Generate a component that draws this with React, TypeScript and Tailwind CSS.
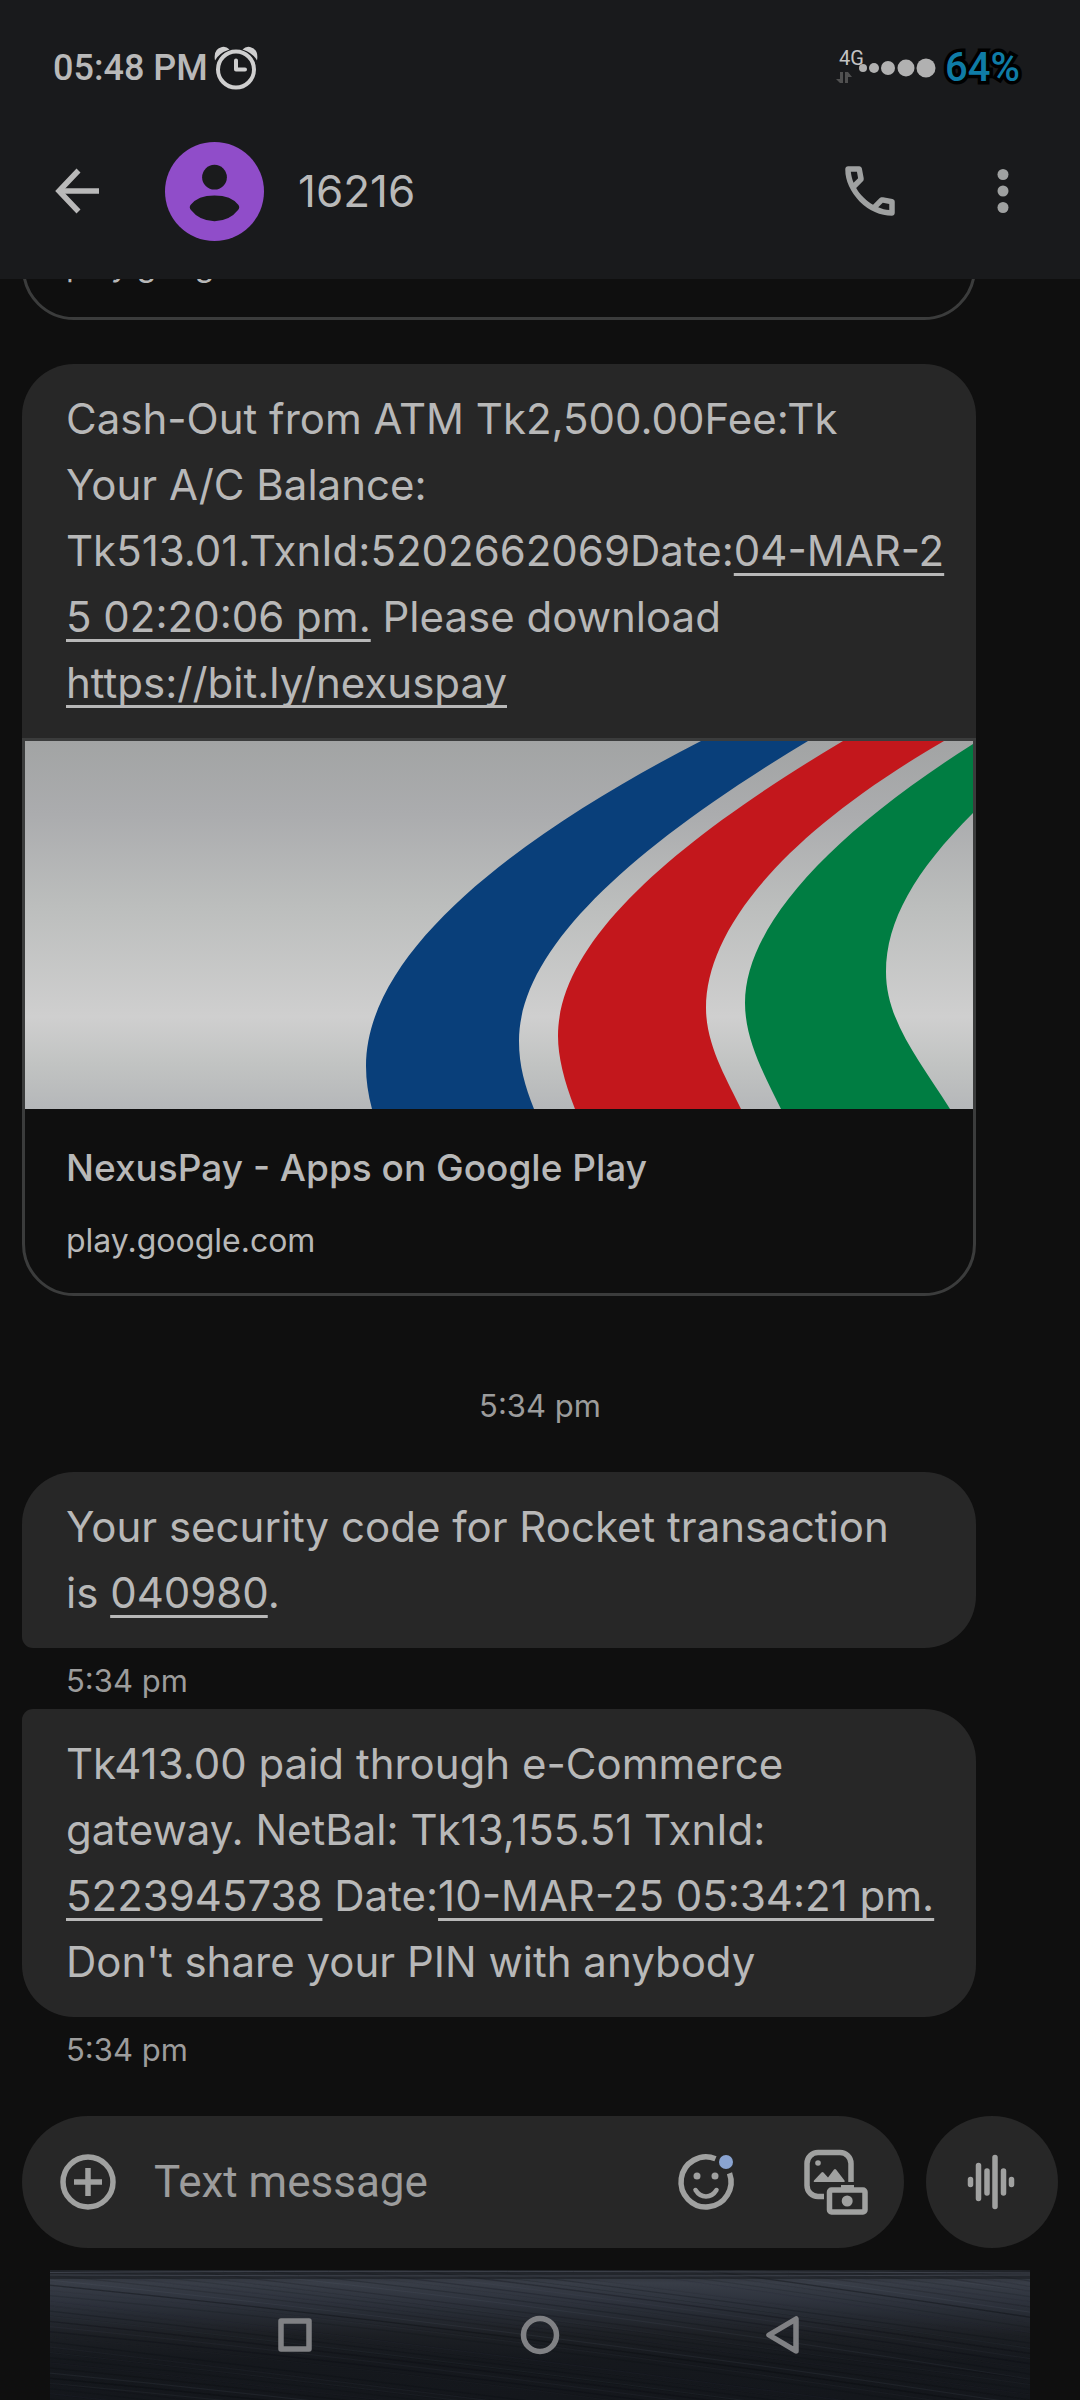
import type { ReactNode } from 'react';

function Banner() {
  return (
    <svg viewBox="0 0 948 368" className="block w-full" role="img" aria-label="NexusPay banner">
      <defs>
        <linearGradient id="metal" x1="0" y1="0" x2="0" y2="1">
          <stop offset="0" stopColor="#a2a4a4" />
          <stop offset="0.2" stopColor="#abacae" />
          <stop offset="0.45" stopColor="#bcbebd" />
          <stop offset="0.75" stopColor="#cfcfcf" />
          <stop offset="0.88" stopColor="#c1c3c2" />
          <stop offset="1" stopColor="#b5b7b9" />
        </linearGradient>
      </defs>
      <rect width="948" height="368" fill="url(#metal)" />
      <path
        d="M676 0C520 80 341 200 341 325Q341 346 347 368H509C500 345 494 325 494 300C494 210 600 110 783 0Z"
        fill="#093f7a"
      />
      <path
        d="M818 0C650 100 533 200 533 295Q533 325 550 368H716C703 340 681 305 681 267C681 190 755 95 919 0Z"
        fill="#c3171c"
      />
      <path
        d="M948 3C795 100 720 190 720 262C720 300 740 335 756 368H925C895 320 861 280 861 231C861 180 890 130 948 72Z"
        fill="#007d42"
      />
    </svg>
  );
}

function StatusBar() {
  return (
    <div className="flex h-[103px] items-end justify-between pr-[60px] pl-[53px] font-[Roboto,sans-serif]">
      <div className="flex h-[70px] items-center gap-[6px] text-[#b9b9b9]">
        <span className="text-[36px] font-medium">05:48 PM</span>
        <svg viewBox="0 0 44 44" className="size-11" role="img" aria-label="Alarm set">
          <path d="M1 14.500Q-1 3 8 1 12 0 15.500 3.500 5 7 1 14.500Z" fill="#cfcfcf" />
          <path d="M43 14.500Q45 3 36 1 32 0 28.500 3.500 39 7 43 14.500Z" fill="#cfcfcf" />
          <circle cx="22" cy="23.500" r="18" fill="none" stroke="#cfcfcf" strokeWidth="4" />
          <path d="M22 14.500v9h9" fill="none" stroke="#cfcfcf" strokeWidth="4" strokeLinecap="round" strokeLinejoin="round" />
        </svg>
      </div>
      <div className="flex h-[70px] items-center gap-2">
        <div className="relative">
          <svg viewBox="0 0 102 44" className="h-11 w-[102px]" role="img" aria-label="Signal strength">
            <g fill="#b1b1b1">
              <circle cx="28" cy="22" r="4" />
              <circle cx="39" cy="22" r="5" />
              <circle cx="53" cy="22" r="7" />
              <circle cx="71" cy="22" r="8.500" />
              <circle cx="91" cy="22" r="9.500" />
            </g>
            <path d="M5 26h3v11H5l-4-4h4zM10 26h3l4 5h-4v6h-3z" fill="#505050" />
          </svg>
          <span className="absolute top-0 left-1 text-[20px] leading-6 text-[#c4c4c4]">4G</span>
        </div>
        <span className="text-[40px] font-medium text-[#0f7ca6] [-webkit-text-stroke:7px_#000] [paint-order:stroke_fill]">
          64%
        </span>
      </div>
    </div>
  );
}

function ConversationHeader() {
  return (
    <header className="flex h-44 items-center pr-[61px] pl-[45px]">
      <button type="button" aria-label="Back" className="size-[66px]">
        <svg viewBox="0 0 66 66" className="size-[66px]" fill="none" stroke="#b9b9b9" strokeWidth="5.500">
          <path d="M33.500 12.500 14 33l19.500 20.500" />
          <path d="M13 33h41" />
        </svg>
      </button>
      <svg viewBox="0 0 100 100" className="ml-[54px] size-[99px]" role="img" aria-label="Contact photo">
        <circle cx="50" cy="50" r="50" fill="#904dc9" />
        <circle cx="50" cy="35.500" r="12.500" fill="#1a1b1c" />
        <path d="M26 63.500Q33 54 50 54t24 9.500q2 2.500 0 5Q65 80 50 80T26 68.500q-2-2.500 0-5Z" fill="#1a1b1c" />
      </svg>
      <h1 className="ml-[34px] flex-1 text-[44px] text-[#b9b9b9]">16216</h1>
      <button type="button" aria-label="Call" className="size-[66px]">
        <svg viewBox="0 -960 960 960" className="size-[66px]" fill="#9fa1a1">
          <path d="M798-120q-125 0-247-54.500T329-329Q229-429 174.500-551T120-798q0-18 12-30t30-12h162q14 0 25 9.500t13 22.500l26 140q2 16-1 27t-11 19l-97 98q20 37 47.500 71.500T387-386q31 31 65 57.500t72 48.500l94-94q9-9 23.500-13.500T670-390l138 28q14 4 23 14.500t9 23.500v162q0 18-12 30t-30 12ZM241-600l66-66-17-94h-89q5 41 14 81t26 79Zm358 358q39 17 79.500 27t81.500 13v-88l-94-19-67 67Z" />
        </svg>
      </button>
      <button type="button" aria-label="More options" className="ml-[84px] h-[66px] w-8">
        <svg viewBox="0 0 32 66" className="h-[66px] w-8" fill="#9fa1a1">
          <circle cx="16" cy="16.500" r="5.500" />
          <circle cx="16" cy="33" r="5.500" />
          <circle cx="16" cy="49.500" r="5.500" />
        </svg>
      </button>
    </header>
  );
}

function TextLink({ href, children }: { href: string; children: ReactNode }) {
  return (
    <a href={href} className="underline decoration-[3px] underline-offset-[7px] [text-decoration-skip-ink:none]">
      {children}
    </a>
  );
}

const cardFrame = 'block overflow-hidden rounded-b-[52px] border-[3px] border-[#3b3c3c] text-[#b8b8b8]';
const bubbleText = 'bg-[#272727] px-11 py-[22px] text-[42px] leading-[66px] whitespace-nowrap text-[#b8b8b8]';
const timeText = 'text-[31px] leading-[44px] text-[#9c9c9c]';

function Messages() {
  return (
    <main className="flex-1 pr-[104px] pl-[22px]">
      {/* Tail of the previous preview card, scrolled under the header */}
      <div className="flex h-[41px] flex-col justify-end overflow-hidden">
        <a href="https://bit.ly/nexuspay" className={`shrink-0 px-[41px] pt-[21px] pb-[30px] ${cardFrame}`}>
          <div className="text-[32px] leading-[44px]">play.google.com</div>
        </a>
      </div>

      <article className="mt-11">
        <p className={`rounded-t-[52px] ${bubbleText}`}>
          Cash-Out from ATM Tk2,500.00Fee:Tk
          <br />
          Your A/C Balance:
          <br />
          Tk513.01.TxnId:5202662069Date:
          <TextLink href="#date">
            04-MAR-2
            <br />5 02:20:06 pm.
          </TextLink>{' '}
          Please download
          <br />
          <TextLink href="https://bit.ly/nexuspay">https://bit.ly/nexuspay</TextLink>
        </p>
        <a href="https://bit.ly/nexuspay" className={cardFrame}>
          <Banner />
          <div className="px-[41px] pt-[29px] pb-[30px]">
            <div className="text-[37px] leading-[60px] font-medium">NexusPay - Apps on Google Play</div>
            <div className="mt-[21px] text-[32px] leading-[44px]">play.google.com</div>
          </div>
        </a>
      </article>

      <div className={`mt-[88px] -mr-[82px] text-center ${timeText}`}>5:34 pm</div>

      <p className={`mt-11 rounded-[52px] rounded-bl-[11px] ${bubbleText}`}>
        Your security code for Rocket transaction
        <br />
        is <TextLink href="#code">040980</TextLink>.
      </p>
      <div className={`mt-[11px] px-11 ${timeText}`}>5:34 pm</div>

      <p className={`mt-[6px] rounded-[52px] rounded-tl-[11px] ${bubbleText}`}>
        Tk413.00 paid through e-Commerce
        <br />
        gateway. NetBal: Tk13,155.51 TxnId:
        <br />
        <TextLink href="#txn">5223945738</TextLink> Date:<TextLink href="#date">10-MAR-25 05:34:21 pm.</TextLink>
        <br />
        Don't share your PIN with anybody
      </p>
      <div className={`mt-[11px] px-11 ${timeText}`}>5:34 pm</div>
    </main>
  );
}

function Composer() {
  return (
    <form className="flex gap-[22px] px-[22px] pb-[22px]">
      <div className="flex h-[132px] min-w-0 flex-1 items-center rounded-full bg-[#272727] pr-9 pl-[33px]">
        <button type="button" aria-label="Add attachment" className="size-[66px] shrink-0">
          <svg viewBox="0 0 66 66" className="size-[66px]" fill="none" stroke="#a0a1a0" strokeWidth="5.500">
            <circle cx="33" cy="33" r="25" />
            <path d="M33 19v28M19 33h28" />
          </svg>
        </button>
        <input
          type="text"
          aria-label="Text message"
          placeholder="Text message"
          className="ml-[33px] min-w-0 flex-1 bg-transparent font-[Roboto,sans-serif] text-[44px] text-[#b8b8b8] outline-none placeholder:text-[#9c9c9c]"
        />
        <button type="button" aria-label="Emoji" className="size-[66px] shrink-0">
          <svg viewBox="0 0 66 66" className="size-[66px]" fill="none" stroke="#a0a1a0" strokeWidth="5.500">
            <path d="M42.500 9.800A25 25 0 1 0 56.500 24.300" />
            <path d="M22.500 41q4 6.500 10.500 6.500T43.500 41" strokeLinecap="round" strokeWidth="4.500" />
            <circle cx="24" cy="27" r="3.500" fill="#a0a1a0" stroke="none" />
            <circle cx="42" cy="27" r="3.500" fill="#a0a1a0" stroke="none" />
            <circle cx="53" cy="13" r="7" fill="#8aa4d1" stroke="none" />
          </svg>
        </button>
        <button type="button" aria-label="Gallery and camera" className="ml-[63px] size-[66px] shrink-0">
          <svg viewBox="0 0 66 66" className="size-[66px]" fill="none" stroke="#a0a1a0" strokeWidth="5.500">
            <path d="M49 33V14.500a11 11 0 0 0-11-11H16a11 11 0 0 0-11 11v22a11 11 0 0 0 11 11h6" />
            <circle cx="16" cy="14" r="2.800" fill="#a0a1a0" stroke="none" />
            <path d="M12.500 33h29q2 0 .8-1.800L34 20.500q-1-1-2 0l-6 8-4.500-5q-1-1-2 0l-7.500 8q-1 1.500.5 1.500Z" fill="#a0a1a0" stroke="none" />
            <rect x="27.500" y="41" width="35.500" height="22" rx="2" />
            <path d="M39 36h13v4H39z" fill="#a0a1a0" stroke="none" />
            <circle cx="45.200" cy="52" r="5.500" fill="#a0a1a0" stroke="none" />
          </svg>
        </button>
      </div>
      <button
        type="button"
        aria-label="Record voice message"
        className="flex size-[132px] shrink-0 items-center justify-center rounded-full bg-[#272727]"
      >
        <svg viewBox="0 0 66 66" className="size-[66px]" fill="none" stroke="#a0a1a0" strokeWidth="5.500" strokeLinecap="round">
          <path d="M11.500 30.500v5M19.500 16.500v33M28 22v22M36 8.500v49M44.500 22v22M52.500 30.500v5" />
        </svg>
      </button>
    </form>
  );
}

/* Slanted hairlines of the brushed-metal backdrop: y start, tone and strength. */
const grain = Array.from({ length: 90 }, (_, i) => ({
  y: -150 + i * 3.1 + ((i * 37) % 5),
  bend: (i * 13) % 14,
  light: (i * 7) % 3 === 0,
  opacity: 0.05 + ((i * 29) % 10) / 70,
}));

function NavigationBar() {
  return (
    <nav className="relative mx-[50px] flex h-[130px] items-center justify-center overflow-hidden bg-[#14171c]">
      <svg viewBox="0 0 980 130" preserveAspectRatio="none" className="absolute inset-0 h-full w-full" aria-hidden="true">
        <defs>
          <linearGradient id="steel" x1="0" y1="0" x2="0" y2="1">
            <stop offset="0" stopColor="#2a2d33" />
            <stop offset="0.1" stopColor="#383d47" />
            <stop offset="0.25" stopColor="#2d323c" />
            <stop offset="0.5" stopColor="#1c1f24" />
            <stop offset="0.7" stopColor="#15181d" />
            <stop offset="1" stopColor="#14171c" />
          </linearGradient>
        </defs>
        <rect width="980" height="130" fill="url(#steel)" />
        {grain.map((g, i) => (
          <path
            key={i}
            d={`M0 ${g.y}Q490 ${g.y + 45 + g.bend} 980 ${g.y + 125}`}
            fill="none"
            stroke={g.light ? '#6a7080' : '#0a0c10'}
            strokeWidth="1.200"
            opacity={g.light ? g.opacity * 0.7 : g.opacity * 1.3}
          />
        ))}
        <rect width="980" height="9" fill="#1b1e23" opacity="0.6" />
        <path d="M0 2.500Q300 0 980 3M0 5q500 2 980 0" fill="none" stroke="#4a4f5a" strokeWidth="1" opacity="0.7" />
      </svg>
      <button type="button" aria-label="Recent apps" className="relative mr-[185px] size-[60px]">
        <svg viewBox="0 0 60 60" className="size-[60px]" fill="none" stroke="#808184" strokeWidth="5.500" strokeLinejoin="round">
          <rect x="16" y="16" width="28" height="28" />
        </svg>
      </button>
      <button type="button" aria-label="Home" className="relative size-[60px]">
        <svg viewBox="0 0 60 60" className="size-[60px]" fill="none" stroke="#808184" strokeWidth="5.500">
          <circle cx="30" cy="30" r="16.500" />
        </svg>
      </button>
      <button type="button" aria-label="Back" className="relative ml-[185px] size-[60px]">
        <svg viewBox="0 0 60 60" className="size-[60px]" fill="none" stroke="#808184" strokeWidth="5.500" strokeLinejoin="round">
          <path d="M41 14v32L14 30Z" />
        </svg>
      </button>
    </nav>
  );
}

export default function App() {
  return (
    <div className="flex min-h-screen flex-col bg-[#0f0f0f] font-[Inter,sans-serif]">
      <div className="bg-[#191a1c]">
        <StatusBar />
        <ConversationHeader />
      </div>
      <Messages />
      <Composer />
      <NavigationBar />
    </div>
  );
}
